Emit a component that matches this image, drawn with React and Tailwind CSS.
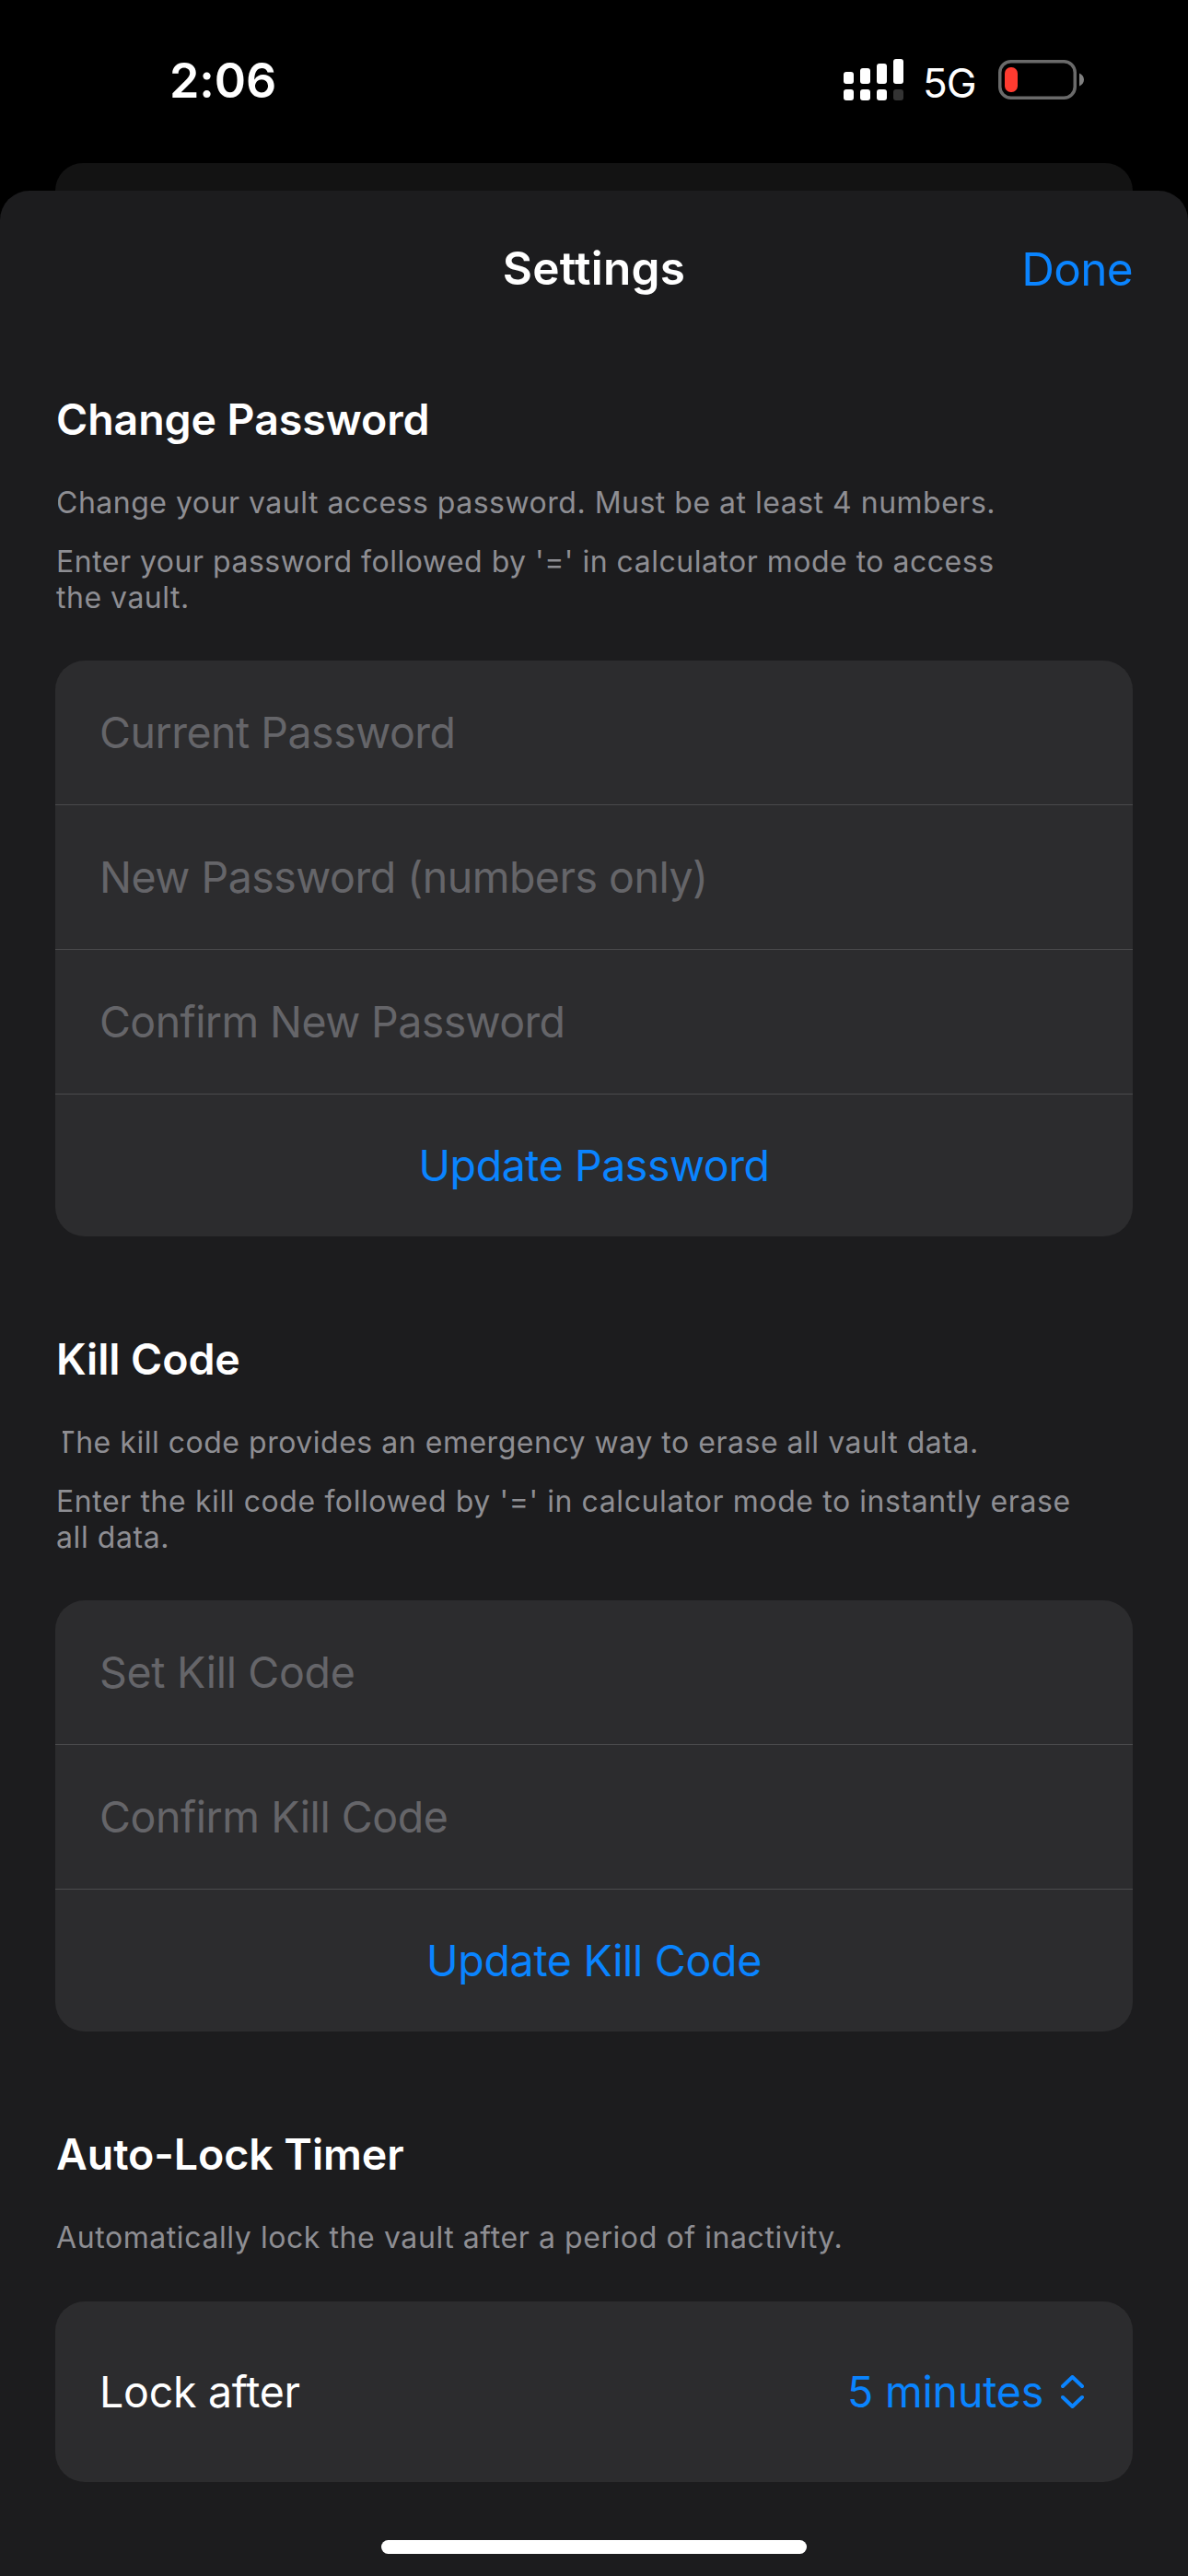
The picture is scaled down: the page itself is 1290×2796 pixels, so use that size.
import React from "react";

function SignalIcon() {
  return (
    <svg width="65" height="45" viewBox="0 0 65 45" fill="#fff">
      <rect x="0" y="14" width="11" height="13" rx="3" />
      <rect x="18" y="10" width="11" height="17" rx="3" />
      <rect x="36" y="5" width="11" height="22" rx="3" />
      <rect x="54" y="0" width="11" height="27" rx="3" />
      <rect x="0" y="33" width="11" height="12" rx="3" />
      <rect x="18" y="33" width="11" height="12" rx="3" />
      <rect x="36" y="33" width="11" height="12" rx="3" />
      <rect x="54" y="33" width="11" height="12" rx="3" fill="#333" />
    </svg>
  );
}

function BatteryIcon() {
  return (
    <svg width="93" height="43" viewBox="0 0 93 43">
      <rect x="1.75" y="1.75" width="81.5" height="39.5" rx="12" fill="none" stroke="#6a6a6a" strokeWidth="3.5" />
      <rect x="7" y="8" width="14" height="27" rx="6.5" fill="#ff3b30" />
      <path d="M88 14.5c3 1.2 5 3.800 5 7s-2 5.800-5 7z" fill="#808080" />
    </svg>
  );
}

function UpDownIcon() {
  return (
    <svg width="25" height="36" viewBox="0 0 25 36" fill="none" stroke="#0a84ff" strokeWidth="4" strokeLinecap="round" strokeLinejoin="round">
      <path d="M2 12L12.500 2L23 12" />
      <path d="M2 24L12.500 34L23 24" />
    </svg>
  );
}

function Heading({ children }) {
  return <h2 className="h-[56px] pl-px text-[46.5px] leading-[56px] font-semibold tracking-[-0.08px] text-white">{children}</h2>;
}

function Card({ children, className = "" }) {
  return <div className={`overflow-hidden rounded-[32px] bg-[#2c2c2e] ${className}`}>{children}</div>;
}

function Field({ children, className }) {
  return (
    <div className="flex h-[157px] items-center border-b border-[#4a4a4c] pl-12 text-[46.5px] leading-[56px] text-[#656569]">
      <span className={className}>{children}</span>
    </div>
  );
}

function Action({ children, className }) {
  return (
    <button className={`flex h-[154px] w-full items-center justify-center text-[46.5px] leading-[56px] text-[#0a84ff] ${className}`}>
      {children}
    </button>
  );
}

export default function App() {
  return (
    <div className="flex h-[2796px] w-[1290px] flex-col overflow-hidden bg-black font-['Inter',sans-serif]">
      <div className="flex h-[173px] shrink-0 items-center pr-[113px] pl-[184px] text-white">
        <span className="mt-[3px] text-[52px] leading-[60px] font-semibold tracking-[-0.1px]">2:06</span>
        <div className="ml-auto flex items-center">
          <SignalIcon />
          <span className="mt-[6px] ml-[21px] w-[59px] text-[44px] leading-[56px] tracking-[-1px]">5G</span>
          <span className="ml-[23px]">
            <BatteryIcon />
          </span>
        </div>
      </div>

      <div className="mx-[60px] mt-1 h-[30px] shrink-0 rounded-t-[30px] bg-[#131313]" />

      <main className="flex grow flex-col rounded-t-[32px] bg-[#1c1c1e] px-[60px]">
        <header className="grid h-[170px] grid-cols-3 items-center text-[49.5px] leading-[60px]">
          <h1 className="col-start-2 -mt-[2px] text-center font-semibold tracking-[0.3px] text-white">Settings</h1>
          <button className="justify-self-end tracking-[-0.7px] text-[#0a84ff]">Done</button>
        </header>

        <section className="mt-[50px]">
          <Heading>Change Password</Heading>
          <div className="mt-[43px] pl-px text-[32px] leading-[39px] tracking-[0.5px] whitespace-nowrap text-[#8e8e93]">
            <p className="[clip-path:inset(0_0_0_2px)]">Change your vault access password. Must be at least 4 numbers.</p>
            <p className="mt-[25px]">
              Enter your password followed by '=' in calculator mode to access
              <br />
              the vault.
            </p>
          </div>
          <Card className="mt-[49px]">
            <Field className="tracking-[-0.5px]">Current Password</Field>
            <Field className="tracking-[-0.5px]">New Password (numbers only)</Field>
            <Field className="tracking-[-0.6px]">Confirm New Password</Field>
            <Action className="tracking-[-0.45px]">Update Password</Action>
          </Card>
        </section>

        <section className="mt-[105px]">
          <Heading>Kill Code</Heading>
          <div className="mt-[43px] pl-px text-[32px] leading-[39px] whitespace-nowrap text-[#8e8e93]">
            <p className="tracking-[0.52px] [clip-path:inset(0_0_0_7px)]">The kill code provides an emergency way to erase all vault data.</p>
            <p className="mt-[25px] tracking-[0.59px]">
              Enter the kill code followed by '=' in calculator mode to instantly erase
              <br />
              all data.
            </p>
          </div>
          <Card className="mt-[49px]">
            <Field className="tracking-[-0.3px]">Set Kill Code</Field>
            <Field className="tracking-[-0.45px]">Confirm Kill Code</Field>
            <Action className="tracking-[-0.3px]">Update Kill Code</Action>
          </Card>
        </section>

        <section className="mt-[105px]">
          <Heading>Auto-Lock Timer</Heading>
          <p className="mt-[43px] pl-px text-[32px] leading-[39px] tracking-[0.58px] whitespace-nowrap text-[#8e8e93]">
            Automatically lock the vault after a period of inactivity.
          </p>
          <Card className="mt-[50px] flex h-[196px] items-center justify-between pr-[53px] pl-12 text-[46.5px] leading-[56px] tracking-[-0.27px]">
            <span className="text-white">Lock after</span>
            <button className="flex items-center gap-[19px] tracking-[-0.2px] text-[#0a84ff]">
              5 minutes
              <UpDownIcon />
            </button>
          </Card>
        </section>

        <div className="mx-auto mt-auto mb-6 h-[15px] w-[462px] rounded-full bg-white" />
      </main>
    </div>
  );
}
